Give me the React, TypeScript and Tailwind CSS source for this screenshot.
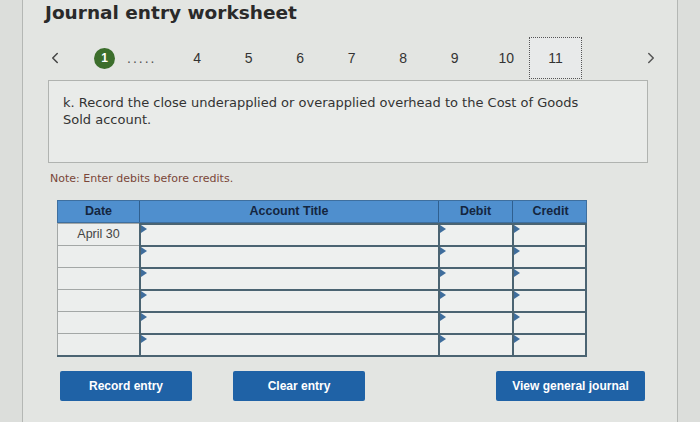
import { ChevronLeft, ChevronRight } from 'lucide-react';

const steps = ['4', '5', '6', '7', '8', '9', '10'];
const rows = ['April 30', '', '', '', '', ''];

function InputCell({ last }: { last?: boolean }) {
  return (
    <div
      className={`relative h-[22px] border-l-2 border-t-2 border-[#4b6472] bg-[#eef0ef] ${
        last ? 'border-r-2' : ''
      }`}
    >
      <span className="absolute left-0 top-0 h-0 w-0 border-y-[4px] border-l-[6px] border-y-transparent border-l-[#3f6d9c]" />
    </div>
  );
}

export default function App() {
  return (
    <div
      className="h-[422px] w-[700px] overflow-hidden bg-[#dcdedb]"
      style={{ fontFamily: '"DejaVu Sans", Verdana, sans-serif' }}
    >
      <div className="mx-[22px] flex h-full flex-col border-x border-[#b4b7b4] bg-[#e3e5e2]">
        {/* Title */}
        <h1 className="ml-[22px] mt-[1px] text-[18.5px] font-bold leading-[24px] text-[#2a2a2a]">
          Journal entry worksheet
        </h1>

        {/* Step nav */}
        <div
          className="mt-[12px] flex h-[42px] items-center text-[14px] text-[#333]"
          style={{ fontFamily: '"Liberation Sans", Arial, sans-serif' }}
        >
          <ChevronLeft className="ml-[23px] h-[18px] w-[18px] text-[#444]" strokeWidth={2} />
          <div className="ml-[30px] flex h-[21px] w-[21px] items-center justify-center rounded-full bg-[#3c6e2c] text-[12px] font-bold text-white">
            1
          </div>
          <span className="ml-[12px] tracking-[2px] text-[#555]">.....</span>
          <div className="ml-[15px] flex">
            {steps.map((s) => (
              <span key={s} className="w-[51.5px] text-center">
                {s}
              </span>
            ))}
          </div>
          <div className="ml-[-3px] flex h-[42px] w-[53px] items-center justify-center border border-dotted border-[#555] bg-[#e8eaea]">
            11
          </div>
          <ChevronRight className="ml-[60px] h-[18px] w-[18px] text-[#555]" strokeWidth={2} />
        </div>

        {/* Question */}
        <div className="ml-[25px] mr-[29px] mt-[1px] h-[83px] border border-[#b0b3b0] bg-[#e9ebe9] px-[14px] pt-[13px] text-[13px] leading-[17px] text-[#333]">
          k. Record the close underapplied or overapplied overhead to the Cost of Goods
          <br />
          Sold account.
        </div>

        <p className="ml-[27px] mt-[9px] text-[11px] leading-[14px] text-[#7a4638]">
          Note: Enter debits before credits.
        </p>

        {/* Table */}
        <div
          className="ml-[34px] mt-[14px] w-[530px]"
          style={{ fontFamily: '"Liberation Sans", Arial, sans-serif' }}
        >
          <div className="grid h-[23px] grid-cols-[82px_299px_74px_75px] border border-[#3e6f9f] bg-[#4f8fce] text-[12.5px] font-bold text-[#14263f]">
            <div className="flex items-center justify-center border-r border-[#2f5f8f]">Date</div>
            <div className="flex items-center justify-center border-r border-[#2f5f8f]">Account Title</div>
            <div className="flex items-center justify-center border-r border-[#2f5f8f]">Debit</div>
            <div className="flex items-center justify-center">Credit</div>
          </div>
          <div className="border-b-2 border-[#4b6472]">
            {rows.map((d, i) => (
              <div key={i} className="grid grid-cols-[82px_299px_74px_75px]">
                <div className="flex h-[22px] items-center justify-center border-l border-t border-[#a3a7a6] bg-[#eceeed] text-[12.5px] text-[#444]">
                  {d}
                </div>
                <InputCell />
                <InputCell />
                <InputCell last />
              </div>
            ))}
          </div>
        </div>

        {/* Buttons */}
        <div
          className="ml-[37px] mt-[14px] flex text-[12px] font-bold text-white"
          style={{ fontFamily: '"Liberation Sans", Arial, sans-serif' }}
        >
          <button className="h-[30px] w-[132px] rounded-[2px] bg-[#1f62a6]">Record entry</button>
          <button className="ml-[41px] h-[30px] w-[132px] rounded-[2px] bg-[#1f62a6]">Clear entry</button>
          <button className="ml-[131px] h-[30px] w-[149px] rounded-[2px] bg-[#1f62a6]">
            View general journal
          </button>
        </div>
      </div>
    </div>
  );
}
